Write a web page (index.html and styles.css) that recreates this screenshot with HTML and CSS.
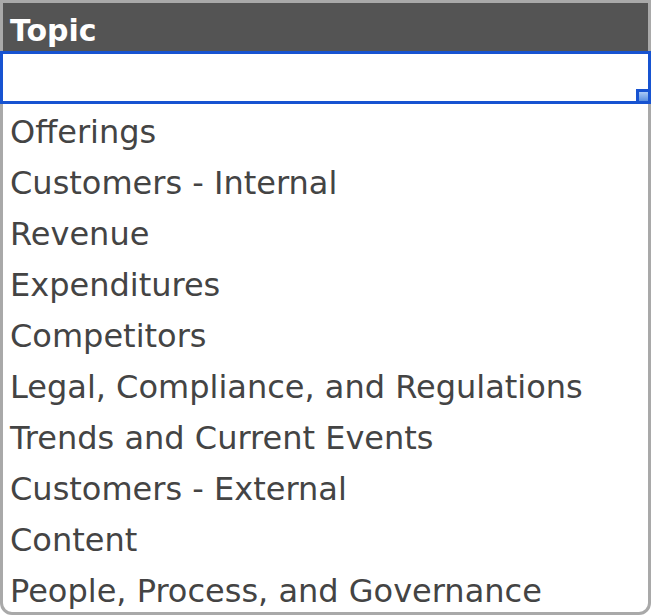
FILE: index.html
```html
<!DOCTYPE html>
<html lang="en">
<head>
    <meta charset="UTF-8">
    <title>Topic</title>
    <link rel="stylesheet" href="styles.css">
</head>
<body>
    <div class="picker">
        <div class="picker-head">Topic</div>
        <div class="picker-input">
            <input type="text" class="topic-field">
            <span class="grip"></span>
        </div>
        <ul class="topic-list">
            <li>Offerings</li>
            <li>Customers - Internal</li>
            <li>Revenue</li>
            <li>Expenditures</li>
            <li>Competitors</li>
            <li>Legal, Compliance, and Regulations</li>
            <li>Trends and Current Events</li>
            <li>Customers - External</li>
            <li>Content</li>
            <li>People, Process, and Governance</li>
        </ul>
    </div>
</body>
</html>
```

FILE: styles.css
```css
body {
    margin: 0;
    padding: 0;
    background: #fff;
    font-family: "DejaVu Sans", Verdana, sans-serif;
}
.picker {
    width: 651px;
    height: 615px;
    box-sizing: border-box;
    border: 3px solid #a9a9a9;
    border-radius: 0 0 12px 12px;
}
.picker-head {
    background-color: #545454;
    color: #fff;
    font-weight: bold;
    font-size: 30px;
    height: 48px;
    line-height: 56px;
    padding-left: 7px;
    overflow: hidden;
}
.picker-input {
    position: relative;
    margin: 0 -3px;
    height: 53px;
}
.topic-field {
    display: block;
    width: 100%;
    height: 100%;
    box-sizing: border-box;
    border: 3px solid #1753d1;
    margin: 0;
    outline: none;
    font-size: 24px;
}
.grip {
    position: absolute;
    right: 0;
    bottom: 0;
    width: 9px;
    height: 9px;
    border: 3px solid #1753d1;
    background: linear-gradient(#a9c9f5, #5a8fe0);
}
.topic-list {
    list-style: none;
    margin: 0;
    padding: 2px 0 0 7px;
    height: 506px;
    overflow: hidden;
    color: #444;
    font-size: 32px;
}
.topic-list li {
    height: 51px;
    line-height: 52px;
    white-space: nowrap;
}
```
